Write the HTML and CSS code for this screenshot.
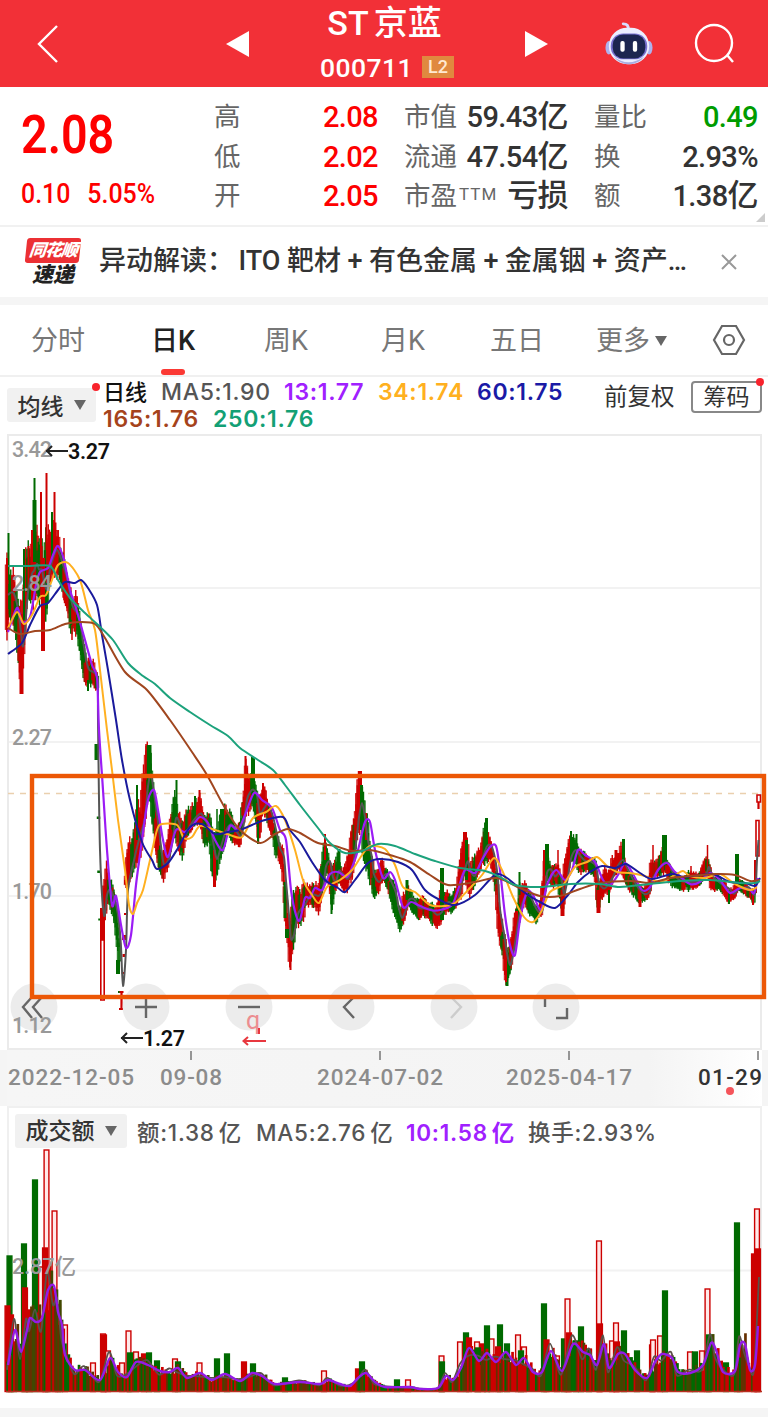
FILE: index.html
```html
<!DOCTYPE html>
<html lang="zh-CN">

<head>
    <meta charset="UTF-8">
    <meta name="viewport" content="width=device-width, initial-scale=1.0">
    <title>ST京蓝 000711</title>
    <link rel="stylesheet" href="styles.css">
</head>

<body>
    <header class="topbar">
        <svg class="back" width="22" height="40" viewBox="0 0 22 40"><path d="M20 2 L2 20 L20 38" /></svg>
        <svg class="prev" width="23" height="26" viewBox="0 0 23 26"><path d="M23 0 V26 L0 13z" /></svg>
        <div class="stock">
            <div class="stock-name">ST<span>京蓝</span></div>
            <div class="stock-code"><span>000711</span><b>L2</b></div>
        </div>
        <svg class="next" width="23" height="26" viewBox="0 0 23 26"><path d="M0 0 V26 L23 13z" /></svg>
        <svg class="robot" width="48" height="46" viewBox="0 0 50 46">
            <path d="M24 8 Q25 2 19 2" fill="none" stroke="#d9dcff" stroke-width="3" stroke-linecap="round" />
            <ellipse cx="4" cy="27" rx="3.5" ry="7" fill="#aeb2ee" />
            <ellipse cx="46" cy="27" rx="3.5" ry="7" fill="#aeb2ee" />
            <rect x="4" y="6" width="42" height="38" rx="19" fill="#eceeff" />
            <path d="M9 36 Q24 48 41 36 Q35 44 25 44 Q15 44 9 36z" fill="#a9aee0" />
            <rect x="6" y="12" width="38" height="27" rx="13" fill="#7770cf" />
            <rect x="8" y="13" width="34" height="25" rx="11" fill="#1c2550" />
            <rect x="16" y="20" width="4.500" height="11" rx="2" fill="#fff" />
            <rect x="29" y="20" width="4.500" height="11" rx="2" fill="#fff" />
        </svg>
        <svg class="search" width="42" height="42" viewBox="0 0 42 42"><circle cx="20" cy="20" r="18" /><path d="M33 32 L39 39" /></svg>
    </header>

    <section class="quote">
        <div class="quote-main">
            <div class="price">2.08</div>
            <div class="change"><span>0.10</span><span>5.05%</span></div>
        </div>
        <ul class="quote-col col-a">
            <li><span>高</span><b class="up">2.08</b></li>
            <li><span>低</span><b class="up">2.02</b></li>
            <li><span>开</span><b class="up">2.05</b></li>
        </ul>
        <ul class="quote-col col-b">
            <li><span>市值</span><b>59.43<i>亿</i></b></li>
            <li><span>流通</span><b>47.54<i>亿</i></b></li>
            <li><span>市盈<sup>TTM</sup></span><b><i>亏损</i></b></li>
        </ul>
        <ul class="quote-col col-c">
            <li><span>量比</span><b class="down">0.49</b></li>
            <li><span>换</span><b>2.93%</b></li>
            <li><span>额</span><b>1.38<i>亿</i></b></li>
        </ul>
        <div class="corner"></div>
    </section>

    <section class="news">
        <div class="news-logo">
            <span class="logo-top">同花顺</span>
            <span class="logo-bottom">速递</span>
        </div>
        <div class="news-title"><span class="news-tag">异动解读：</span><span>ITO</span><span>靶材</span><span>+</span><span>有色金属</span><span>+</span><span>金属铟</span><span>+</span><span>资产…</span></div>
        <svg class="close" width="16" height="16" viewBox="0 0 16 16"><path d="M1 1 L15 15 M15 1 L1 15" /></svg>
    </section>

    <nav class="tabs">
        <a class="tab t1">分时</a>
        <a class="tab t2 active">日K</a>
        <a class="tab t3">周K</a>
        <a class="tab t4">月K</a>
        <a class="tab t5">五日</a>
        <a class="tab t6">更多<svg width="12" height="10" viewBox="0 0 12 10"><path d="M0 0 H12 L6 10z" fill="#666" /></svg></a>
        <svg class="setting" width="34" height="32" viewBox="0 0 34 32"><path d="M10 2 H24 L32 16 L24 30 H10 L2 16z" /><circle cx="17" cy="16" r="5" /></svg>
    </nav>

    <section class="legend">
        <div class="picker">均线<svg width="12" height="10" viewBox="0 0 12 10"><path d="M0 0 H12 L6 10z" fill="#666" /></svg><i class="dot"></i></div>
        <div class="ma-list">
            <div class="ma-row">
                <span class="ma-kind">日线</span>
                <span class="ma5">MA5:1.90</span>
                <span class="ma13">13:1.77</span>
                <span class="ma34">34:1.74</span>
                <span class="ma60">60:1.75</span>
            </div>
            <div class="ma-row">
                <span class="ma165">165:1.76</span>
                <span class="ma250">250:1.76</span>
            </div>
        </div>
        <span class="adjust">前复权</span>
        <span class="chips">筹码<i class="dot"></i></span>
    </section>

    <svg id="price-chart" class="chart" width="768" height="616" viewBox="0 434 768 616"></svg>

    <svg class="chart axis" width="768" height="56" viewBox="0 1050 768 56">
        <defs>
            <linearGradient id="axis-bg" x1="0" x2="1" y1="0" y2="0">
                <stop offset="0" stop-color="#f6f6f6" />
                <stop offset="0.85" stop-color="#f4f4f4" />
                <stop offset="1" stop-color="#fff" />
            </linearGradient>
        </defs>
        <rect x="7" y="1050" width="755" height="56" fill="url(#axis-bg)" />
        <path d="M191 1051 V1060 M380 1051 V1060 M569 1051 V1060 M758 1051 V1060" stroke="#777" stroke-width="1.5" />
        <text x="8" y="1085" textLength="126">2022-12-05</text>
        <text x="160" y="1085" textLength="62">09-08</text>
        <text x="317" y="1085" textLength="126">2024-07-02</text>
        <text x="506" y="1085" textLength="126">2025-04-17</text>
        <text class="now" x="698" y="1085" textLength="64">01-29</text>
        <circle cx="730" cy="1091" r="4" fill="#f5545a" />
    </svg>

    <section class="volume">
        <div class="volume-head">
            <div class="picker">成交额<svg width="12" height="10" viewBox="0 0 12 10"><path d="M0 0 H12 L6 10z" fill="#666" /></svg></div>
            <span class="v1">额:1.38<i>亿</i></span>
            <span class="v2">MA5:2.76<i>亿</i></span>
            <span class="v3">10:1.58<i>亿</i></span>
            <span class="v4">换手:2.93%</span>
        </div>
        <svg id="volume-chart" class="chart" width="768" height="258" viewBox="0 1150 768 258"></svg>
    </section>

    <script src="chart.js"></script>
</body>

</html>
```
FILE: styles.css
```css
* {
    box-sizing: border-box;
}

body {
    margin: 0;
    width: 768px;
    height: 1417px;
    overflow: hidden;
    background: #f5f5f5;
    color: #333;
    font-family: "Roboto", "Noto Sans CJK SC", sans-serif;
}

ul {
    list-style: none;
    margin: 0;
    padding: 0;
}

i {
    font-style: normal;
}

.topbar {
    display: flex;
    align-items: center;
    height: 87px;
    background: #f23037;
    color: #fff;
}

.topbar svg {
    flex: none;
    fill: #fff;
}

.topbar .back,
.topbar .search {
    fill: none;
    stroke: #fff;
    stroke-width: 2.4;
}

.back {
    margin-left: 37px;
}

.prev {
    margin-left: 167px;
}

.stock {
    width: 276px;
    height: 87px;
    text-align: center;
    padding-top: 3px;
}

.stock-name {
    display: flex;
    justify-content: center;
    gap: 5px;
    height: 43px;
    line-height: 41px;
    font-size: 34px;
    font-weight: 500;
    padding-right: 5px;
}

.stock-code {
    display: flex;
    justify-content: center;
    align-items: center;
    gap: 9px;
    height: 42px;
    font-size: 26.5px;
    font-weight: 500;
    letter-spacing: 0.4px;
}

.stock-code b {
    width: 32px;
    height: 22px;
    line-height: 22px;
    font-size: 18px;
    font-weight: 500;
    letter-spacing: 0;
    background: #e0893f;
    color: #ffe9d2;
}

.robot {
    margin-left: 57px;
}

.search {
    margin-left: 41px;
}

.quote {
    position: relative;
    display: flex;
    height: 140px;
    background: #fff;
    border-bottom: 2px solid #f1f1f1;
}

.quote-main {
    width: 192px;
    margin-left: 21px;
    color: #fe0000;
}

.price {
    height: 76px;
    padding-top: 17px;
    line-height: 62px;
    font-size: 53px;
    font-weight: 600;
    transform: scaleX(0.88);
    transform-origin: left;
}

.change {
    display: flex;
    gap: 19px;
    padding-top: 14px;
    line-height: 34px;
    font-size: 28px;
    font-weight: 500;
    transform: scaleX(0.89);
    transform-origin: left;
}

.quote-col {
    padding-top: 10px;
    font-size: 26.5px;
    color: #666;
}

.quote-col li {
    display: flex;
    justify-content: space-between;
    height: 39.5px;
    line-height: 40px;
    white-space: nowrap;
}

.quote-col b {
    color: #333;
    font-size: 29px;
    font-weight: 500;
    letter-spacing: -0.6px;
}

.quote-col b i {
    font-size: 31px;
}

.quote-col b.up {
    color: #fe0000;
}

.quote-col b.down {
    color: #009c00;
}

.quote-col sup {
    margin-left: 2px;
    font-size: 17px;
    line-height: 0;
    vertical-align: 5px;
    letter-spacing: 1px;
}

.col-a {
    width: 164px;
    margin-left: 1px;
}

.col-b {
    width: 164px;
    margin-left: 26px;
}

.col-c {
    width: 164px;
    margin-left: 26px;
}

.corner {
    position: absolute;
    right: 3px;
    bottom: 3px;
    border-left: 9px solid transparent;
    border-bottom: 9px solid #ccc;
}

.news {
    display: flex;
    align-items: center;
    height: 70px;
    background: #fff;
}

.news-logo {
    display: flex;
    flex-direction: column;
    align-items: center;
    width: 58px;
    margin-left: 24px;
    font-weight: 900;
    font-style: italic;
}

.logo-top {
    width: 54px;
    height: 25px;
    line-height: 24px;
    text-align: center;
    font-size: 17px;
    letter-spacing: -1px;
    color: #fff;
    background: #ec3034;
    border-radius: 3px;
    transform: skewX(-6deg);
}

.logo-bottom {
    height: 24px;
    line-height: 25px;
    font-size: 21px;
    color: #222;
}

.news-title {
    display: flex;
    justify-content: space-between;
    width: 588px;
    height: 42px;
    line-height: 40px;
    margin-left: 17px;
    font-size: 27px;
    font-weight: 500;
    white-space: nowrap;
}

.news-tag {
    width: 133px;
}

.close {
    margin-left: 34px;
    fill: none;
    stroke: #999;
    stroke-width: 2;
}

.tabs {
    display: flex;
    height: 72px;
    margin-top: 8px;
    background: #fff;
    border-bottom: 2px solid #f0f0f0;
    line-height: 73px;
    font-size: 27px;
    color: #777;
}

.tab {
    white-space: nowrap;
}

.t1 {
    width: 121px;
    padding-left: 31px;
}

.t2 {
    width: 104px;
    margin-left: 30px;
}

.t3 {
    width: 107px;
    margin-left: 9px;
}

.t4 {
    width: 109px;
    margin-left: 10px;
}

.t5 {
    width: 106px;
}

.t6 svg {
    margin-left: 5px;
    vertical-align: 4px;
}

.tab.active {
    position: relative;
    color: #222;
    font-weight: 500;
}

.tab.active::after {
    content: "";
    position: absolute;
    left: 10px;
    bottom: 0;
    width: 24px;
    height: 6px;
    border-radius: 3px;
    background: #fb3934;
}

.setting {
    margin: 19px 0 0 45px;
    fill: none;
    stroke: #666;
    stroke-width: 2.2;
}

.legend {
    display: flex;
    height: 57px;
    background: #fff;
    white-space: nowrap;
}

.picker {
    position: relative;
    display: flex;
    align-items: center;
    justify-content: center;
    gap: 10px;
    width: 89px;
    height: 34px;
    margin: 11px 0 0 7px;
    background: #f1f1f1;
    border-radius: 3px;
    font-size: 23px;
    font-weight: 500;
    color: #333;
}

.dot {
    position: absolute;
    right: -4px;
    top: -5px;
    width: 8px;
    height: 8px;
    border-radius: 50%;
    background: #f8232c;
}

.ma-list {
    width: 500px;
    margin-left: 7px;
    font-family: "Inter", "Noto Sans CJK SC", sans-serif;
    font-size: 23px;
    font-weight: 500;
    letter-spacing: 0.7px;
}

.ma-row {
    display: flex;
    height: 27px;
    line-height: 30px;
}

.ma-kind {
    width: 58px;
    font-size: 22px;
    letter-spacing: 0;
    color: #111;
}

.ma5 {
    width: 123px;
    color: #555;
}

.ma13 {
    width: 94px;
    font-weight: 600;
    color: #a020ff;
}

.ma34 {
    width: 99px;
    font-weight: 600;
    color: #ffb020;
}

.ma60 {
    font-weight: 600;
    color: #1a1aa6;
}

.ma165 {
    width: 110px;
    font-weight: 600;
    color: #a5431b;
}

.ma250 {
    font-weight: 600;
    color: #13a075;
}

.adjust {
    width: 87px;
    margin-left: 1px;
    line-height: 41px;
    font-size: 23.5px;
}

.chips {
    position: relative;
    width: 71px;
    height: 32px;
    margin-top: 4px;
    border: 2px solid #888;
    border-radius: 4px;
    line-height: 30px;
    font-size: 23px;
    text-align: center;
}

.chart {
    display: block;
    overflow: visible;
    background: #fff;
    font-family: "Roboto", "Noto Sans CJK SC", sans-serif;
}

.axis {
    background: none;
}

.axis text {
    font-size: 22.5px;
    font-weight: 500;
    fill: #8c8c8c;
}

.axis .now {
    fill: #333;
}

.scale {
    font-size: 21.5px;
    font-weight: 500;
    fill: #999;
}

.mark {
    font-size: 21.5px;
    font-weight: 600;
    fill: #111;
}

.volume {
    height: 302px;
    background: #fff;
}

.volume-head {
    display: flex;
    height: 44px;
    margin: 0 6px 0 7px;
    border: 2px solid #f0f0f0;
    border-bottom: 0;
    line-height: 50px;
    font-family: "Inter", "Noto Sans CJK SC", sans-serif;
    font-size: 22.5px;
    font-weight: 500;
    letter-spacing: 0.75px;
    color: #555;
    white-space: nowrap;
}

.volume-head i {
    margin-left: 4px;
}

.volume-head .picker {
    width: 112px;
    margin: 6px 10px 0 6px;
    line-height: 34px;
    letter-spacing: 0;
}

.v1 {
    width: 119px;
}

.v2 {
    width: 150px;
}

.v3 {
    width: 122px;
    color: #a020ff;
    font-weight: 600;
}
```
FILE: chart.js
```js
const RED = '#cc0000';
const GREEN = '#006a00';

// 固定种子的随机数，保证每次图形一致
let seed = 711;
function rand() {
    seed = (seed * 16807) % 2147483647;
    return seed / 2147483647;
}

function pairs(text, size) {
    const nums = text.trim().split(/[\s,]+/).map(Number);
    const out = [];
    for (let i = 0; i < nums.length; i += size) out.push(nums.slice(i, i + size));
    return out;
}

// 平滑曲线
function curve(points) {
    let d = `M${points[0]}`;
    for (let i = 0; i < points.length - 1; i++) {
        const a = points[i - 1] || points[i];
        const b = points[i];
        const c = points[i + 1];
        const e = points[i + 2] || c;
        d += `C${b[0] + (c[0] - a[0]) / 7},${b[1] + (c[1] - a[1]) / 7} ${c[0] - (e[0] - b[0]) / 7},${c[1] - (e[1] - b[1]) / 7} ${c}`;
    }
    return d;
}

function line(points, color, width = 2) {
    return `<path d="${curve(points)}" fill="none" stroke="${color}" stroke-width="${width}" stroke-linejoin="round"/>`;
}

function interp(points, x, k) {
    let i = 1;
    while (i < points.length - 1 && points[i][0] < x) i++;
    const a = points[i - 1];
    const b = points[i];
    const t = Math.max(0, Math.min(1, (x - a[0]) / (b[0] - a[0] || 1)));
    return a[k] + (b[k] - a[k]) * t;
}

// x, 最高, 最低
const range = pairs(`
7 558 632, 10 562 618, 13 570 625, 17 590 650, 20 602 688, 22 602 694, 24 560 662, 27 548 600, 31 548 600, 33 530 605, 36 520 600,
38 552 606, 41 530 592, 43 560 645, 46 530 622, 49 536 590, 53 522 575, 56 528 575, 59 538 580, 62 548 592, 66 568 605,
69 582 620, 72 592 634, 76 594 632, 79 612 646, 82 636 668, 85 652 680, 88 658 688, 92 656 685, 95 670 688, 97 676 692`, 3);
const rangeAfter = pairs(`
104 880 922, 106 863 915, 109 870 910, 112 885 915, 115 892 925, 118 920 950, 120 945 972`, 3);
const rangeMain = pairs(`
126 868 890, 129 842 882, 133 842 876, 137 800 856, 140 815 862, 144 768 825, 147 748 805, 150 750 795, 153 792 836, 157 803 855, 160 850 876,
163 852 880, 168 833 868, 172 812 842, 175 788 832, 178 815 850, 181 818 860, 185 812 845, 190 808 832, 195 802 828, 200 794 830,
205 816 845, 210 818 845, 213 842 882, 216 835 878, 220 815 858, 225 808 842, 230 812 835, 235 828 848, 240 825 845, 243 792 830,
246 766 810, 249 782 812, 252 762 802, 256 790 828, 259 795 840, 263 787 812, 267 795 822, 272 815 835, 276 832 855, 279 842 862,
283 850 875, 285 880 918, 288 918 945, 290 925 968, 293 895 950, 297 890 920, 301 892 930, 305 880 910, 309 887 906, 313 880 905,
318 884 914, 322 862 892, 325 840 872, 329 852 882, 332 868 908, 335 860 890, 338 853 880, 342 873 890, 347 862 890, 352 832 880,
355 812 850, 358 778 830, 361 778 826, 364 805 860, 367 820 876, 371 848 885, 373 868 896, 378 870 894, 382 860 882, 386 867 886,
390 876 895, 395 886 915, 398 906 928, 401 905 932, 404 892 920, 408 882 906, 413 897 912, 418 901 920, 424 897 916, 430 902 921,
436 908 928, 441 890 922, 444 886 918, 448 892 912, 452 896 915, 457 882 906, 460 860 900, 464 838 880, 467 842 885, 470 866 895,
474 857 885, 478 852 872, 482 838 866, 486 822 860, 490 838 862, 494 852 880, 497 880 907, 499 908 940, 503 930 955, 506 946 982,
509 950 982, 512 930 960, 515 913 945, 517 905 930, 520 882 915, 525 882 902, 530 892 915, 536 908 924, 541 900 915, 544 868 900,
546 848 876, 550 868 886, 554 866 886, 558 858 882, 561 875 908, 563 880 915, 566 850 885, 570 838 862, 575 838 862, 580 852 875,
585 848 870, 590 856 872, 595 858 880, 598 880 910, 603 868 896, 608 872 898, 612 858 880, 617 852 872, 622 844 872, 626 867 886,
632 872 892, 638 886 905, 644 886 900, 649 880 898, 651 860 882, 657 862 878, 663 840 872, 668 862 880, 673 870 887, 680 876 890,
690 872 890, 700 873 886, 706 856 874, 708 858 880, 712 876 892, 720 876 890, 728 886 902, 733 887 900, 738 878 890, 748 885 897, 754 890 904`, 3);

function candles(data) {
    let svg = '';
    let up = true;
    let keep = 0;
    for (let x = data[0][0]; x <= data[data.length - 1][0]; x += 1.25) {
        const hi = interp(data, x, 1);
        const lo = interp(data, x, 2);
        const span = lo - hi;
        if (keep-- <= 0) {
            const slope = interp(data, x + 3, 1) - interp(data, x - 3, 1);
            up = rand() < (slope < -3 ? 0.7 : slope > 3 ? 0.35 : 0.5);
            keep = Math.floor(rand() * 3);
        }
        const top = hi + span * rand() * 0.4;
        const bottom = lo - span * rand() * 0.35;
        const color = up ? RED : GREEN;
        svg += `<path d="M${x} ${top - span * 0.17} V${bottom + span * 0.15}" stroke="${color}" stroke-width="1.4"/>`;
        svg += `<rect x="${x - 1.7}" y="${top}" width="3.4" height="${Math.max(2, bottom - top)}" fill="${color}" stroke="${color}" stroke-width="1" fill-opacity="0.7" stroke-opacity="0.8"/>`;
    }
    return svg;
}

function middle(data) {
    return data.map((p, i) => {
        const n = data[i - 1] || p;
        return [p[0] + 1, (p[1] + p[2] + n[1] + n[2]) / 4];
    });
}

// 影线: x, 上, 下, 宽, 颜色(1红 0绿)
const wicks = pairs(`
8.5 533 580 2 0, 7 558 632 2 1, 34.5 478 560 2 0, 34.5 500 562 4 0, 41 492 560 2 1, 46.5 473 550 2 1, 54.5 492 550 2 1, 52 512 560 2 0,
64 538 600 1.5 1, 24 549 620 2 0, 28.5 546 590 2 1, 32 530 600 2 1, 43 558 651 4 1, 21.5 660 694 4 1, 72 625 640 1.5 1,
88 680 691 2 0, 96.5 744 760 4 0, 98.5 816.5 819 3.5 0, 99 870.5 873 3.5 0, 100 918.5 920.5 3.5 0, 102.5 908 945 5 1,
118 960 974 4 0, 120 991 993 4 0, 126 913 915 4 1, 124 935 940 4 1, 124 954 957 3 1, 123 972 974 3 1, 125.5 880 884 3 1,
137 785 840 2 0, 149 745 785 5 0, 146 744 780 1.5 1, 176.5 780 830 2 0, 199.5 790 820 2 1, 195 796 820 2 0, 214.5 850 887 3 1,
217 809 850 1.5 0, 222 809 840 4 0, 245.5 756 790 2 1, 253 757 800 4 0, 263 783 810 2 1, 258 820 844 2 0, 287 929 938 4 0,
285 882 918 3 0, 290.5 940 970 2 1, 325 834 860 2 1, 331.5 895 914 2 0, 339 849 880 3 0, 360 771 830 4 1, 361.5 785 830 3 0, 366 813 840 2 1,
407 880 900 3 0, 442 868 920 4 0, 465 832 860 4 1, 466.5 840 880 3 0, 486.5 818 850 3 0, 507 960 986 3 0, 506 955 982 2 1,
516.5 911 935 3 1, 519.5 872 895 2 0, 547 844 875 4 0, 544 850 880 2 1, 558 850 875 1.5 1, 562.5 890 916 4 1, 571 831 860 2 0,
576.5 834 860 2 0, 598.5 890 913 4 1, 609 890 903 2 0, 616 850 875 3 1, 623.5 839 865 3 0, 640 890 907 3 1, 653 845 875 1.5 1,
664.5 835 865 5 0, 691 866 885 1.5 1, 707.5 845 875 1.5 1, 737 854 885 4 0, 729 890 904 2 0, 753 895 905 2 1, 755.5 860 893 3 1`, 5);

const ma13 = pairs(`8 632 17 608 22 622 30 617 36 585 40 572 48 568 53 555 58 546 64 560 70 590 76 608 85 640 92 665 97 678 99 730 103 790 107 850
112 905 116 896 121 925 126 948 131 935 136 885 142 840 148 800 154 790 158 810 163 840 168 857 176 830 185 832 193 825 200 817 208 823 215 840 223 850
230 826 238 830 245 815 254 793 262 800 272 808 280 830 286 840 291 890 296 915 300 920 305 898 310 898 315 888 322 890 330 874 338 872 347 877 353 865
358 850 365 822 370 822 375 850 383 878 390 872 395 880 403 907 411 902 418 905 430 910 440 910 452 905 458 890 465 870 475 873 482 860 490 847 496 846
500 870 505 915 510 945 515 955 520 920 527 892 533 895 541 910 547 885 556 870 565 880 572 870 578 850 585 855 595 862 603 880 610 885 618 875 625 863
632 872 642 890 650 887 658 870 667 863 675 872 690 884 700 882 710 873 720 880 730 893 740 888 750 890 754 893 758 878`, 2);
const ma34 = pairs(`8 628 17 612 24 624 32 615 40 597 46 595 52 580 58 565 68 563 80 580 88 610 95 630 100 670 107 730 112 770 118 820 125 870 129 905
133 914 137 903 143 890 150 860 157 830 162 824 177 825 184 838 192 837 200 826 215 830 230 835 242 837 253 818 266 812 276 806 285 820 295 850 303 880
312 895 319 903 327 887 340 880 352 870 362 855 370 846 385 849 395 865 403 887 415 892 430 905 445 906 455 903 470 888 482 875 494 858 502 870 513 897
524 917 533 922 541 912 550 892 563 885 575 867 587 862 597 857 607 866 617 872 630 873 645 876 660 882 675 875 683 871 690 876 705 878 720 874 735 884
750 890 757 887`, 2);
const ma60 = pairs(`8 654 22 643 30 625 40 606 48 603 58 590 65 582 75 583 81 580 88 588 97 605 102 635 108 670 116 720 122 760 130 800 142 842 152 860
157 869 168 863 178 848 190 827 202 824 215 834 228 832 240 830 252 825 265 820 283 817 290 830 300 842 312 862 325 880 338 888 345 892 355 880 368 863
380 859 398 862 412 870 425 890 440 900 455 905 475 895 495 875 507 878 525 893 540 902 555 908 568 895 578 882 590 872 602 866 615 868 626 864 640 873
652 879 672 874 685 877 712 874 730 882 745 883 755 886 760 878`, 2);
const ma165 = pairs(`8 628 20 634 35 631 50 630 65 624 80 622 95 624 105 638 125 672 147 690 170 720 192 752 207 775 225 808 240 830 260 843 275 834 288 829
300 833 318 843 335 846 352 851 370 850 390 855 410 862 430 875 448 885 475 882 497 878 520 888 540 896 560 896 580 889 600 883 630 881 650 883 670 878
690 876 715 874 735 875 750 881 760 880`, 2);
const ma250 = pairs(`8 566 30 566 50 566 58 580 70 598 85 613 97 624 113 640 128 663 143 676 155 684 170 698 190 712 210 725 228 736 240 748 258 760 273 770
285 785 300 805 318 828 330 843 345 853 362 851 378 844 395 846 415 854 435 861 460 868 485 871 500 877 515 885 540 887 570 884 600 884 620 887 650 884
680 881 710 880 740 883 755 883 760 881`, 2);

function button(x, icon, color = '#666') {
    return `<circle cx="${x}" cy="1007" r="23.5" fill="#ddd" fill-opacity="0.55"/>
        <path d="${icon}" fill="none" stroke="${color}" stroke-width="2.4"/>`;
}

function drawPrice() {
    let svg = `<path d="M8 588 H761 M8 742 H761 M8 896 H761" stroke="#f2f2f2" stroke-width="2"/>
        <rect x="8" y="435" width="753" height="614" fill="none" stroke="#ebebeb" stroke-width="2"/>
        <path d="M8 793.5 H761" stroke="#ead0ae" stroke-width="1.6" stroke-dasharray="6 6"/>`;
    svg += candles(range) + candles(rangeAfter) + candles(rangeMain);
    wicks.forEach(([x, top, bottom, width, up]) => {
        svg += `<path d="M${x} ${top} V${bottom}" stroke="${up ? RED : GREEN}" stroke-width="${width}"/>`;
    });
    svg += `<path d="M100.8 940 V1000 H104.2 V940z M756 856 V820.5 H759 V856z M757 795 H760.5 V802 H757z" fill="#fff" stroke="${RED}" stroke-width="1.6"/>
        <path d="M758.5 802 V809 M119.5 992 H123.5 M121.5 992 V1009 M119 1009 H123" stroke="${RED}" stroke-width="2.2"/>`;
    const gray = middle(range).concat([[98, 720], [100, 850], [104, 915]], middle(rangeAfter).slice(1), [[123, 986], [126, 950], [128, 890]], middle(rangeMain).slice(2), [[757, 860], [758.5, 840]]);
    svg += line(gray, '#555', 2);
    svg += line(ma13, '#9b1cf5', 2.2) + line(ma34, '#ffb020') + line(ma60, '#1a1a9c') + line(ma165, '#a0461f') + line(ma250, '#1ca27c');
    svg += button(34, 'M32 997 L23 1007 L32 1018 M42 997 L33 1007 L42 1018')
        + button(146, 'M135 1007 H157 M146 997 V1018')
        + button(249, 'M238 1007 H260')
        + button(351, 'M354 997 L344 1007 L354 1018')
        + button(454, 'M451 997 L461 1007 L451 1018', '#ccc')
        + button(556, 'M545 1007 V997 H554 M567 1008 V1018 H556');
    svg += `<g class="scale">
            <text x="12" y="457" textLength="40">3.42</text>
            <text x="12" y="591" textLength="40">2.84</text>
            <text x="12" y="745" textLength="40">2.27</text>
            <text x="12" y="899" textLength="40">1.70</text>
            <text x="12" y="1033" textLength="40">1.12</text>
        </g>
        <path d="M46 451 H68 M52 446 L47 451 L52 456 M121 1038 H143 M127 1033 L122 1038 L127 1043" fill="none" stroke="#222" stroke-width="2"/>
        <text class="mark" x="68" y="459" textLength="42">3.27</text>
        <text class="mark" x="143" y="1045.5" textLength="42">1.27</text>
        <text x="246" y="1029" font-size="25" fill="#ec8d90">q</text>
        <path d="M259 1028 V1034 M243 1041 H266 M248 1037 L243.5 1041 L248 1045" fill="none" stroke="#e8383f" stroke-width="2"/>
        <rect x="32" y="776" width="732" height="221" fill="none" stroke="#ec5706" stroke-width="4.4"/>`;
    document.getElementById('price-chart').innerHTML = svg;
}

const volMa = pairs(`8 1365 15 1330 21 1352 27 1330 30 1318 36 1322 42 1318 48 1290 54 1286 58 1312 62 1325 65 1355 75 1370 85 1370 100 1380 110 1358
118 1372 127 1377 136 1362 148 1365 160 1371 170 1372 178 1368 187 1378 200 1373 212 1380 225 1374 240 1381 252 1373 262 1376 275 1384 300 1382 320 1384
328 1380 340 1384 350 1386 358 1378 366 1373 375 1382 385 1387 410 1387 420 1389 438 1388 446 1376 453 1380 461 1368 469 1348 479 1361 487 1353 496 1362
506 1352 516 1365 524 1358 533 1372 542 1372 551 1351 562 1371 573 1344 583 1352 590 1355 597 1365 604 1344 609 1368 618 1354 625 1354 635 1370 647 1378
655 1362 662 1354 672 1358 678 1372 690 1373 703 1365 711 1343 716 1350 723 1372 735 1371 740 1345 745 1344 750 1370 755 1365 758 1326`, 2);

// x, 顶部, 类型(0绿 1红空心 2红实心)
const spikes = pairs(`9.5 1256 0, 24 1244 0, 35 1180 0, 41 1267 1, 46.5 1150 1, 54.5 1211 1, 45 1248 2, 48 1316 0, 7.5 1306 2, 11 1315 2, 25 1288 2,
30 1310 2, 65 1325 1, 58 1305 2, 29 1333 0, 14 1345 0, 60 1347 0, 93 1363 1, 103 1334 1, 104 1335 2, 108 1351 1, 122 1363 1, 128.5 1331 1, 136 1352 1, 130 1353 0,
144 1354 2, 149 1353 0, 157 1361 0, 175 1359 1, 178 1362 0, 199.5 1363 1, 217 1359 0, 227 1354 0, 244 1362 2, 253 1364 0, 285 1378 0, 324 1371 1,
358 1369 2, 362 1362 0, 397 1380 0, 408 1380 1, 441.5 1356 1, 442 1362 0, 460 1342 1, 466 1333 0, 469 1338 2, 477 1342 1, 483 1344 2, 478 1348 0,
491.5 1339 1, 487 1326 0, 500 1325 0, 507 1344 0, 498 1347 2, 518 1335 1, 524 1347 1, 521 1351 0, 544 1304 0, 546.5 1340 2, 557 1356 1, 564 1339 0,
567.5 1299 1, 569 1333 2, 576 1341 0, 581 1327 0, 589 1350 0, 599 1241 1, 600 1324 2, 612 1341 1, 616 1323 1, 617 1342 2, 624 1331 0, 637 1351 0,
652 1345 2, 653 1340 1, 660 1336 1, 665 1291 0, 690 1352 1, 695 1352 0, 702 1351 1, 707.5 1289 1, 709 1335 0, 726 1363 0, 737 1223 0, 740 1345 2,
754 1254 2, 757 1209 1, 758 1249 2`, 3);

function drawVolume() {
    const base = 1391.5;
    let svg = `<path d="M8 1150 V1391 M761 1150 V1391" stroke="#ebebeb" stroke-width="2"/>
        <path d="M8 1270.5 H761" stroke="#f2f2f2" stroke-width="2"/>`;
    spikes.forEach(([x, top, kind]) => {
        const color = kind ? RED : GREEN;
        svg += `<rect x="${x - 2.4}" y="${top}" width="4.8" height="${base - top}" fill="${kind === 1 ? '#ffe9e9' : color}" stroke="${color}" stroke-width="1.4"/>`;
    });
    for (let x = 7.5; x < 760; x += 1.7) {
        const h = base - interp(volMa, x - 1, 1);
        const height = h * (0.8 + rand() * 0.45);
        const kind = rand();
        const color = x > 753 || kind < 0.36 ? RED : kind < 0.6 ? GREEN : kind < 0.85 ? '#643000' : '#404800';
        svg += `<rect x="${x - 1.2}" y="${base - height}" width="2.7" height="${height}" fill="${color}"/>`;
    }
    const gray = [];
    volMa.forEach(([x, y], i) => {
        gray.push([x - 1, y + (i % 2 ? -1 : 1) * (base - y) * 0.18]);
    });
    gray[gray.length - 1] = [759, 1277];
    svg += line(gray, '#5a5048', 1.8);
    svg += line(volMa, '#941be8', 2.4);
    svg += `<path d="M6 1391.5 H762" stroke="#b83020" stroke-width="1.4"/>
        <text class="scale" x="12" y="1274" textLength="64">2.87亿</text>`;
    document.getElementById('volume-chart').innerHTML = svg;
}

drawPrice();
drawVolume();
```
